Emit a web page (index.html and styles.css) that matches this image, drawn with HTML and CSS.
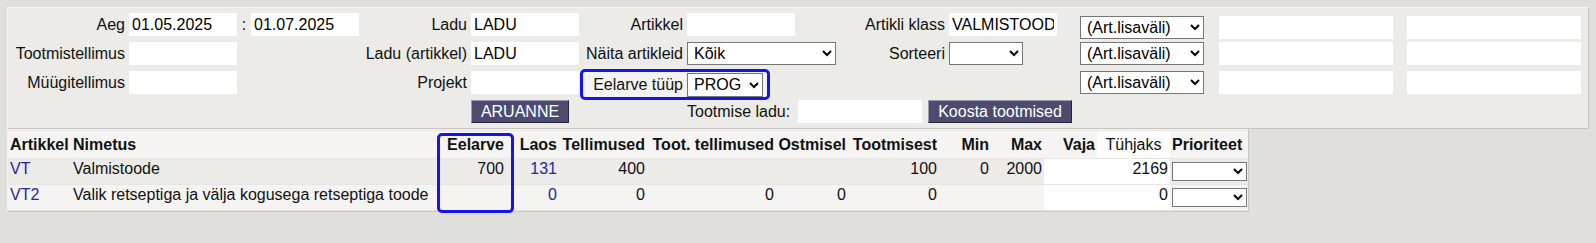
FILE: index.html
```html
<!DOCTYPE html>
<html lang="et">
<head>
  <meta charset="UTF-8">
  <title>Tootmise planeerimine</title>
  <link rel="stylesheet" href="styles.css">
</head>
<body>
  <form class="filters">
    <label class="lbl">Aeg</label>
    <input class="field" type="text" value="01.05.2025">
    <span class="colon">:</span>
    <input class="field" type="text" value="01.07.2025">
    <label class="lbl">Ladu</label>
    <input class="field" type="text" value="LADU">
    <label class="lbl">Artikkel</label>
    <input class="field" type="text">
    <label class="lbl">Artikli klass</label>
    <input class="field" type="text" value="VALMISTOODE">
    <span></span>
    <select class="extra-sel top"><option>(Art.lisaväli)</option></select>
    <input class="extra top" type="text">
    <input class="extra top" type="text">

    <label class="lbl">Tootmistellimus</label>
    <input class="field" type="text">
    <span></span>
    <span></span>
    <label class="lbl">Ladu (artikkel)</label>
    <input class="field" type="text" value="LADU">
    <label class="lbl">Näita artikleid</label>
    <select class="show-sel"><option>Kõik</option></select>
    <label class="lbl">Sorteeri</label>
    <select class="sort-sel"><option></option></select>
    <span></span>
    <select class="extra-sel"><option>(Art.lisaväli)</option></select>
    <input class="extra" type="text">
    <input class="extra" type="text">

    <label class="lbl">Müügitellimus</label>
    <input class="field" type="text">
    <span></span>
    <span></span>
    <label class="lbl">Projekt</label>
    <input class="field" type="text">
    <div class="budget-type">
      <label>Eelarve tüüp</label>
      <select><option>PROG</option></select>
    </div>
    <span></span>
    <span></span>
    <span></span>
    <select class="extra-sel"><option>(Art.lisaväli)</option></select>
    <input class="extra" type="text">
    <input class="extra" type="text">

    <span></span>
    <span></span>
    <span></span>
    <span></span>
    <span></span>
    <button type="button" class="btn report-btn">ARUANNE</button>
    <span></span>
    <div class="make">
      <span class="make-lbl">Tootmise ladu:</span>
      <input class="make-field" type="text">
      <button type="button" class="btn make-btn">Koosta tootmised</button>
    </div>
  </form>

  <div class="report">
    <table>
      <colgroup>
        <col style="width:63px"><col style="width:369px"><col style="width:66px"><col style="width:53px">
        <col style="width:88px"><col style="width:129px"><col style="width:72px"><col style="width:91px">
        <col style="width:52px"><col style="width:53px"><col style="width:53px"><col style="width:73px">
        <col style="width:78px">
      </colgroup>
      <thead>
        <tr>
          <th>Artikkel</th>
          <th>Nimetus</th>
          <th class="num">Eelarve</th>
          <th class="num">Laos</th>
          <th class="num">Tellimused</th>
          <th class="num">Toot. tellimused</th>
          <th class="num">Ostmisel</th>
          <th class="num">Tootmisest</th>
          <th class="num">Min</th>
          <th class="num">Max</th>
          <th class="num">Vaja</th>
          <th class="empty">Tühjaks</th>
          <th>Prioriteet</th>
        </tr>
      </thead>
      <tbody>
        <tr>
          <td><a href="#">VT</a></td>
          <td>Valmistoode</td>
          <td class="num">700</td>
          <td class="num"><a href="#">131</a></td>
          <td class="num">400</td>
          <td class="num"></td>
          <td class="num"></td>
          <td class="num">100</td>
          <td class="num">0</td>
          <td class="num">2000</td>
          <td class="num blank"></td>
          <td class="num blank">2169</td>
          <td class="pick"><select class="prio"><option></option></select></td>
        </tr>
        <tr>
          <td><a href="#">VT2</a></td>
          <td>Valik retseptiga ja välja kogusega retseptiga toode</td>
          <td class="num"></td>
          <td class="num"><a href="#">0</a></td>
          <td class="num">0</td>
          <td class="num">0</td>
          <td class="num">0</td>
          <td class="num">0</td>
          <td class="num"></td>
          <td class="num"></td>
          <td class="num blank"></td>
          <td class="num blank">0</td>
          <td class="pick"><select class="prio"><option></option></select></td>
        </tr>
      </tbody>
    </table>
    <div class="mark"></div>
  </div>
</body>
</html>
```

FILE: styles.css
```css
body {
  margin: 0;
  padding: 7px;
  background-color: #e0dfdb;
  font-family: "Liberation Sans", Arial, sans-serif;
  font-size: 16px;
  color: #111;
}
input, select, button {
  font-family: inherit;
  font-size: 16px;
  color: #000;
  box-sizing: border-box;
}
input {
  height: 23px;
  border: none;
  padding: 0 3px;
  background: #fefffe;
}
select {
  height: 23px;
  border: 1px solid #767676;
  border-radius: 0;
  background: #fff;
  padding: 0 0 0 2px;
}
.filters {
  margin: 0;
  height: 122px;
  box-sizing: border-box;
  padding: 2px 4px 2px 1px;
  background: #ecebe7;
  border: 1px solid;
  border-color: #f7f6f4 #c6c4c0 #c6c4c0 #f7f6f4;
  display: grid;
  grid-template-columns: 120px 108px 14px 108px 112px 108px 108px 150px 112px 108px 23px 125px 188px 188px;
  grid-auto-rows: 29px;
  align-items: center;
}
.lbl {
  text-align: right;
  padding-right: 4px;
  white-space: nowrap;
}
.colon {
  text-align: center;
}
.field {
  width: 108px;
}
.show-sel {
  width: 149px;
}
.sort-sel {
  width: 74px;
}
.extra-sel {
  width: 124px;
}
.extra {
  width: 174px;
  justify-self: end;
}
.top {
  margin-top: 5px;
}
.budget-type {
  grid-column: span 2;
  justify-self: start;
  display: flex;
  align-items: center;
  height: 31px;
  box-sizing: border-box;
  margin: 4px 0 0 1px;
  padding-right: 4px;
  border: 3px solid #1414ee;
  border-radius: 5px;
  background: #f4f3f1;
}
.budget-type label {
  width: 104px;
  box-sizing: border-box;
  padding-right: 4px;
  text-align: right;
}
.budget-type select {
  width: 76px;
  height: 24px;
}
.btn {
  height: 23px;
  padding: 0;
  background: #4d4c70;
  color: #fff;
  border: 1px solid;
  border-color: #9a9ab2 #25253a #25253a #9a9ab2;
  cursor: pointer;
}
.report-btn {
  width: 98px;
}
.make-btn {
  width: 144px;
}
.make {
  grid-column: 8 / -1;
  display: flex;
  align-items: center;
}
.make-lbl {
  width: 111px;
  white-space: nowrap;
}
.make-field {
  width: 124px;
  margin-right: 6px;
}
.report {
  position: relative;
  width: 1242px;
}
table {
  table-layout: fixed;
  width: 1242px;
  border-collapse: separate;
  border-spacing: 0 1px;
  background: #e8e6e2;
  border: 1px solid;
  border-color: #f4f3f1 #c9c7c3 #c9c7c3 #f4f3f1;
}
th, td {
  padding: 0 2px;
  white-space: nowrap;
  text-align: left;
  vertical-align: middle;
}
td {
  vertical-align: top;
  padding-top: 1px;
}
td.pick {
  vertical-align: middle;
  padding-top: 0;
}
thead tr {
  height: 27px;
  background: #f5f4f2;
}
tbody tr {
  height: 25px;
}
tbody tr:nth-child(odd) {
  background: #ecebe8;
}
tbody tr:nth-child(even) {
  background: #f5f4f2;
}
.num {
  text-align: right;
}
th.empty {
  text-align: center;
  font-weight: normal;
  background: #fdfefd;
}
td.blank {
  background: #fdfefd;
}
a {
  color: #26269e;
  text-decoration: none;
}
.prio {
  width: 75px;
  height: 19px;
  vertical-align: middle;
}
.mark {
  position: absolute;
  left: 430px;
  top: 4px;
  width: 77px;
  height: 80px;
  box-sizing: border-box;
  border: 3px solid #1414ee;
  border-radius: 5px;
}
```
